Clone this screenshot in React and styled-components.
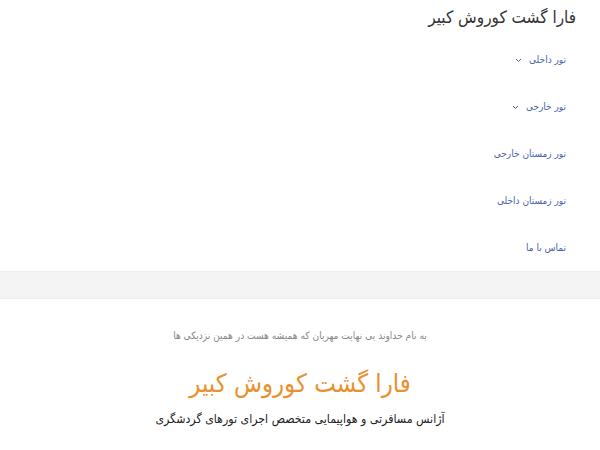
import React from "react";
import styled, { createGlobalStyle } from "styled-components";

const Global = createGlobalStyle`
  html, body { margin: 0; padding: 0; background: #fff; }
  body { font-family: "DejaVu Sans Condensed", "DejaVu Sans", sans-serif; direction: rtl; }
`;

const Header = styled.header`
  padding: 6px 24px 0 24px;
  height: 22px;
`;

const SiteTitle = styled.div`
  font-size: 17px;
  color: #333;
  line-height: 22px;
`;

const Nav = styled.ul`
  list-style: none;
  margin: 0;
  padding: 9px 34px 0 0;
`;

const NavItem = styled.li`
  height: 46.8px;
  display: flex;
  align-items: center;
  font-size: 10px;
  line-height: 14px;
  color: #4a64a8;
`;

const Chevron = styled.svg`
  width: 7px;
  height: 5px;
  margin-right: 7px;
  margin-top: 1px;
`;

const Band = styled.div`
  height: 26px;
  background: #f4f4f4;
  border-top: 1px solid #ededed;
  border-bottom: 1px solid #ededed;
`;

const Hero = styled.section`
  text-align: center;
  padding-top: 30px;
`;

const Blessing = styled.div`
  font-size: 10.1px;
  color: #888;
  line-height: 14px;
`;

const HeroTitle = styled.div`
  font-size: 25.5px;
  color: #e8912f;
  line-height: 30px;
  margin-top: 25px;
`;

const Sub = styled.div`
  font-size: 12.25px;
  color: #222;
  line-height: 18px;
  margin-top: 12px;
`;

const items = [
  { t: "تور داخلی", c: true },
  { t: "تور خارجی", c: true },
  { t: "تور زمستان خارجی" },
  { t: "تور زمستان داخلی" },
  { t: "تماس با ما" },
];

export default function App() {
  return (
    <>
      <Global />
      <Header>
        <SiteTitle>فارا گشت کوروش کبیر</SiteTitle>
      </Header>
      <Nav>
        {items.map((i) => (
          <NavItem key={i.t}>
            <span>{i.t}</span>
            {i.c && (
              <Chevron viewBox="0 0 7 5">
                <path d="M1 1 L3.5 3.5 L6 1" fill="none" stroke="#4a64a8" strokeWidth="1" />
              </Chevron>
            )}
          </NavItem>
        ))}
      </Nav>
      <Band />
      <Hero>
        <Blessing>به نام خداوند بی نهایت مهربان که همیشه هست در همین نزدیکی ها</Blessing>
        <HeroTitle>فارا گشت کوروش کبیر</HeroTitle>
        <Sub>آژانس مسافرتی و هواپیمایی متخصص اجرای تورهای گردشگری</Sub>
      </Hero>
    </>
  );
}
